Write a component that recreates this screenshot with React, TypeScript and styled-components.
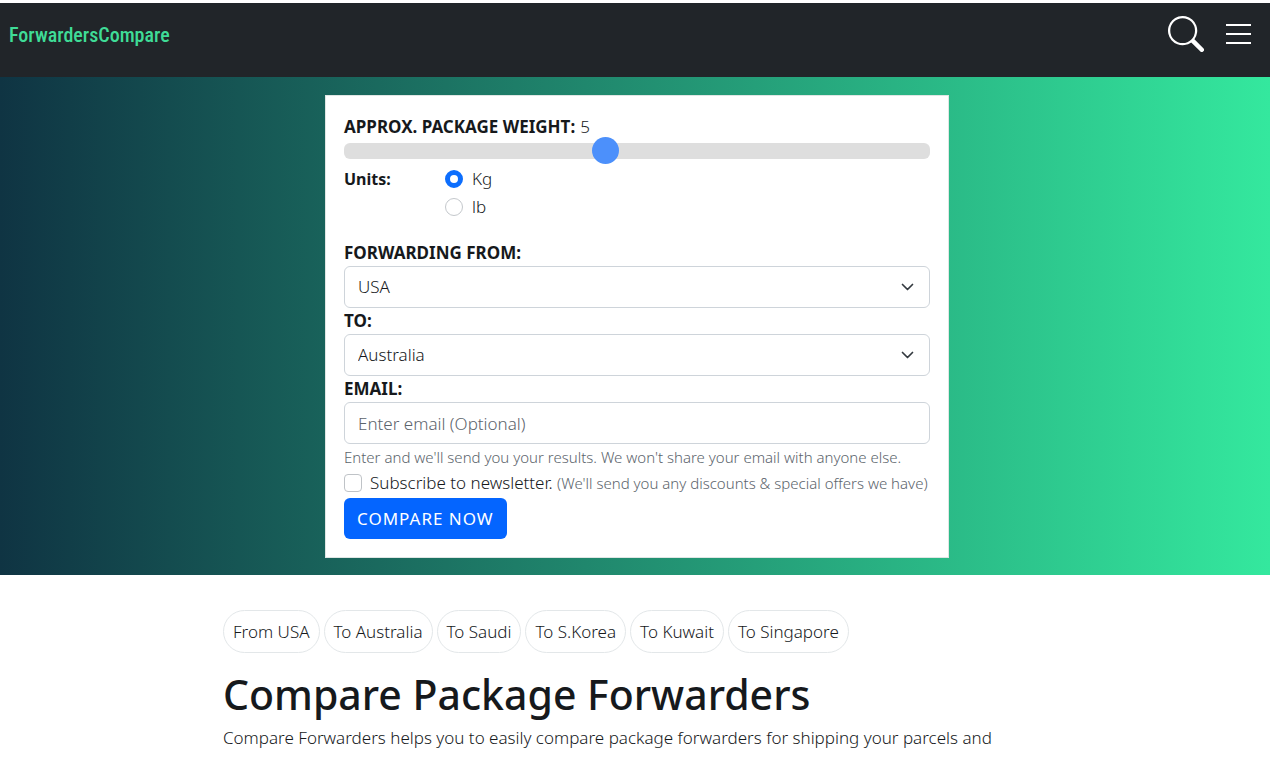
import React, { useState } from "react";
import styled, { createGlobalStyle } from "styled-components";

const GlobalStyle = createGlobalStyle`
  *, *::before, *::after { box-sizing: border-box; }
  body {
    margin: 0;
    background: #fff;
    color: #16191c;
    font-family: "Noto Sans", "Open Sans", sans-serif;
    font-size: 17px;
    font-weight: 300;
    line-height: 26px;
  }
  button, input, select { font: inherit; color: inherit; }
`;

const Header = styled.header`
  display: flex;
  justify-content: space-between;
  align-items: flex-start;
  margin-top: 3px;
  height: 74px;
  padding: 13px 18px 0 9px;
  background: #212529;
`;

const Brand = styled.a`
  padding-top: 3px;
  color: #3fdc97;
  font-family: "Roboto Condensed", "Liberation Sans Narrow", "Liberation Sans", sans-serif;
  font-size: 20px;
  font-weight: 500;
  line-height: 32px;
  text-decoration: none;
`;

const HeaderActions = styled.div`
  display: flex;
  align-items: center;
  gap: 22px;
`;

const IconButton = styled.button`
  display: flex;
  padding: 0;
  border: 0;
  background: none;
  color: #fff;
  cursor: pointer;
`;

const Hero = styled.section`
  padding: 18px 16px 17px 20px;
  background: linear-gradient(to right, #0f3443, #34e89e);
`;

const Card = styled.form`
  max-width: 624px;
  margin: 0 auto;
  padding: 18px;
  border: 1px solid #dfe6e4;
  background: #fff;
`;

const Label = styled.label`
  display: block;
  font-weight: 700;
`;

const WeightLine = styled.div`
  display: flex;
  gap: 5px;
`;

const Slider = styled.input`
  display: block;
  width: 100%;
  height: 22px;
  margin: 0 0 3px;
  appearance: none;
  background: transparent;

  &::-webkit-slider-runnable-track {
    height: 16px;
    border-radius: 6px;
    background: #dedede;
  }
  &::-webkit-slider-thumb {
    appearance: none;
    width: 27px;
    height: 27px;
    margin-top: -6px;
    border-radius: 50%;
    background: #4c90fb;
  }
`;

const Units = styled.fieldset`
  display: flex;
  margin: 0 0 19px;
  padding: 0;
  border: 0;
`;

const UnitsTitle = styled.span`
  width: 101px;
  font-size: 16px;
  font-weight: 700;
  line-height: 28px;
`;

const Choice = styled.label`
  display: flex;
  align-items: center;
  gap: 9px;
  height: 28px;
`;

const Radio = styled.input`
  appearance: none;
  width: 18px;
  height: 18px;
  margin: 0;
  border: 1px solid #c4c8cc;
  border-radius: 50%;
  background: #fff;

  &:checked { border: 5px solid #0d6efd; }
`;

const Select = styled.select`
  display: block;
  width: 100%;
  height: 42px;
  padding: 0 40px 0 13px;
  border: 1px solid #ced4da;
  border-radius: 6px;
  appearance: none;
  background: #fff;
`;

const SelectBox = styled.div`
  position: relative;

  svg {
    position: absolute;
    top: 14px;
    right: 16px;
    pointer-events: none;
  }
`;

const TextInput = styled.input`
  display: block;
  width: 100%;
  height: 42px;
  padding: 0 13px;
  border: 1px solid #ced4da;
  border-radius: 6px;
  background: #fff;

  &::placeholder { color: #5c646c; opacity: 1; }
`;

const Hint = styled.small`
  display: block;
  color: #5c646c;
  font-size: 15px;
`;

const Subscribe = styled.label`
  display: flex;
  align-items: center;
  gap: 8px;
  white-space: nowrap;

  small { color: #5c646c; font-size: 15px; }
`;

const Checkbox = styled.input`
  appearance: none;
  flex: none;
  width: 18px;
  height: 18px;
  margin: 0;
  border: 1px solid #bfc3c7;
  border-radius: 4px;
  background: #fff;

  &:checked { background: #0d6efd; }
`;

const Submit = styled.button`
  display: block;
  height: 41px;
  margin-top: 2px;
  padding: 0 13px;
  border: 0;
  border-radius: 6px;
  background: #0465ff;
  color: #fff;
  font-weight: 400;
  letter-spacing: 1px;
  cursor: pointer;
`;

const Content = styled.main`
  max-width: 824px;
  margin: 0 auto;
  padding-top: 35px;
`;

const Chips = styled.nav`
  display: flex;
  flex-wrap: wrap;
  gap: 4px;
`;

const Chip = styled.a`
  padding: 8px 9px 7px;
  border: 1px solid #e3e7e9;
  border-radius: 22px;
  color: inherit;
  text-decoration: none;
`;

const Title = styled.h1`
  margin: 16px 0 6px;
  font-size: 41px;
  font-weight: 500;
  line-height: 50px;
`;

const Intro = styled.p`
  margin: 0;
`;

const Chevron = () => (
  <svg width="14" height="14" viewBox="0 0 14 14" fill="none" stroke="#343a40" strokeWidth="1.7" strokeLinecap="round" strokeLinejoin="round" aria-hidden="true">
    <path d="m2.500 4.500 5 5 5-5" />
  </svg>
);

const destinations = ["From USA", "To Australia", "To Saudi", "To S.Korea", "To Kuwait", "To Singapore"];

export default function App() {
  const [weight, setWeight] = useState(5);
  const [unit, setUnit] = useState("Kg");

  return (
    <>
      <GlobalStyle />
      <Header>
        <Brand href="#">ForwardersCompare</Brand>
        <HeaderActions>
          <IconButton type="button" aria-label="Search">
            <svg width="36" height="36" viewBox="0 0 16 16" fill="#fff" aria-hidden="true">
              <path d="M11.742 10.344a6.500 6.500 0 1 0-1.397 1.398h-.001q.044.060.098.115l3.850 3.850a1 1 0 0 0 1.415-1.414l-3.850-3.850a1 1 0 0 0-.115-.100zM12 6.500a5.500 5.500 0 1 1-11 0 5.500 5.500 0 0 1 11 0" />
            </svg>
          </IconButton>
          <IconButton type="button" aria-label="Menu">
            <svg width="26" height="24" viewBox="0 0 26 24" stroke="#fff" strokeWidth="2" aria-hidden="true">
              <path d="M0 3h25M0 12h25M0 21h25" />
            </svg>
          </IconButton>
        </HeaderActions>
      </Header>

      <Hero>
        <Card onSubmit={(e) => e.preventDefault()}>
          <WeightLine>
            <Label htmlFor="weight">APPROX. PACKAGE WEIGHT:</Label>
            <output htmlFor="weight">{weight}</output>
          </WeightLine>
          <Slider id="weight" type="range" min={1} max={10} value={weight} onChange={(e) => setWeight(Number(e.target.value))} />

          <Units aria-labelledby="units-title">
            <UnitsTitle id="units-title">Units:</UnitsTitle>
            <div>
              {["Kg", "lb"].map((name) => (
                <Choice key={name}>
                  <Radio type="radio" name="unit" checked={unit === name} onChange={() => setUnit(name)} />
                  {name}
                </Choice>
              ))}
            </div>
          </Units>

          <Label htmlFor="from">FORWARDING FROM:</Label>
          <SelectBox>
            <Select id="from" defaultValue="USA">
              <option>USA</option>
            </Select>
            <Chevron />
          </SelectBox>

          <Label htmlFor="to">TO:</Label>
          <SelectBox>
            <Select id="to" defaultValue="Australia">
              <option>Australia</option>
            </Select>
            <Chevron />
          </SelectBox>

          <Label htmlFor="email">EMAIL:</Label>
          <TextInput id="email" type="email" placeholder="Enter email (Optional)" />
          <Hint>Enter and we'll send you your results. We won't share your email with anyone else.</Hint>

          <Subscribe>
            <Checkbox type="checkbox" />
            <span>
              Subscribe to newsletter. <small>(We'll send you any discounts &amp; special offers we have)</small>
            </span>
          </Subscribe>
          <Submit type="submit">COMPARE NOW</Submit>
        </Card>
      </Hero>

      <Content>
        <Chips aria-label="Popular routes">
          {destinations.map((name) => (
            <Chip key={name} href="#">{name}</Chip>
          ))}
        </Chips>
        <Title>Compare Package Forwarders</Title>
        <Intro>Compare Forwarders helps you to easily compare package forwarders for shipping your parcels and</Intro>
      </Content>
    </>
  );
}
